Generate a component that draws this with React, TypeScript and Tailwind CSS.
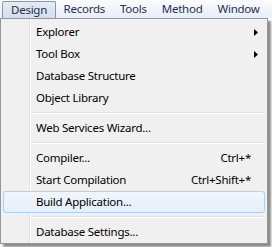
import React from "react";

type Item =
  | { kind: "sep" }
  | { kind: "item"; label: string; shortcut?: string; submenu?: boolean; active?: boolean };

const items: Item[] = [
  { kind: "item", label: "Explorer", submenu: true },
  { kind: "item", label: "Tool Box", submenu: true },
  { kind: "item", label: "Database Structure" },
  { kind: "item", label: "Object Library" },
  { kind: "sep" },
  { kind: "item", label: "Web Services Wizard..." },
  { kind: "sep" },
  { kind: "item", label: "Compiler...", shortcut: "Ctrl+*" },
  { kind: "item", label: "Start Compilation", shortcut: "Ctrl+Shift+*" },
  { kind: "item", label: "Build Application...", active: true },
  { kind: "sep" },
  { kind: "item", label: "Database Settings..." },
];

const menus = ["Design", "Records", "Tools", "Method", "Window"];

export default function App() {
  return (
    <div className="w-[272px] h-[247px] bg-white overflow-hidden font-['Noto_Sans',sans-serif] text-[11.5px] tracking-[-0.25px] leading-none">
      {/* menu bar */}
      <div className="h-[18px] flex items-stretch bg-gradient-to-b from-[#f9fbfe] to-[#e8eef7] text-[#1e2f50]">
        {menus.map((m, i) => (
          <div
            key={m}
            className={
              i === 0
                ? "mt-px ml-[2px] h-[17px] px-[8px] flex items-center rounded-t-[2px] border border-b-0 border-[#8b98ab] bg-gradient-to-b from-[#e6ebf3] to-[#d6deea]"
                : "px-[7.5px] flex items-center"
            }
          >
            {m}
          </div>
        ))}
      </div>

      {/* dropdown */}
      <div className="w-[268px] border border-[#979797] px-[2px] pt-[2px] shadow-[3px_3px_2px_rgba(0,0,0,0.45)] bg-[linear-gradient(to_right,#f0f0f0_28px,#e2e3e3_28px,#e2e3e3_29px,#ffffff_29px,#ffffff_30px,#f0f0f0_30px)]">
        {items.map((it, i) =>
          it.kind === "sep" ? (
            <div key={i} className="h-[8px] flex flex-col justify-center pl-[28px]">
              <div className="h-px bg-[#e2e3e3]" />
              <div className="h-px bg-white" />
            </div>
          ) : (
            <div
              key={i}
              className={
                "h-[22px] flex items-center text-black " +
                (it.active
                  ? "rounded-[3px] border border-[#aecff7] bg-gradient-to-b from-[#f2f6fb] to-[#e5eefa]"
                  : "border border-transparent")
              }
            >
              <span className="pl-[32px] flex-1">{it.label}</span>
              {it.shortcut && <span className="pr-[13px]">{it.shortcut}</span>}
              {it.submenu && (
                <svg className="mr-[6px]" width="4" height="7" viewBox="0 0 4 7">
                  <path d="M0 0 L4 3.5 L0 7 Z" fill="#000" />
                </svg>
              )}
            </div>
          )
        )}
      </div>
    </div>
  );
}
